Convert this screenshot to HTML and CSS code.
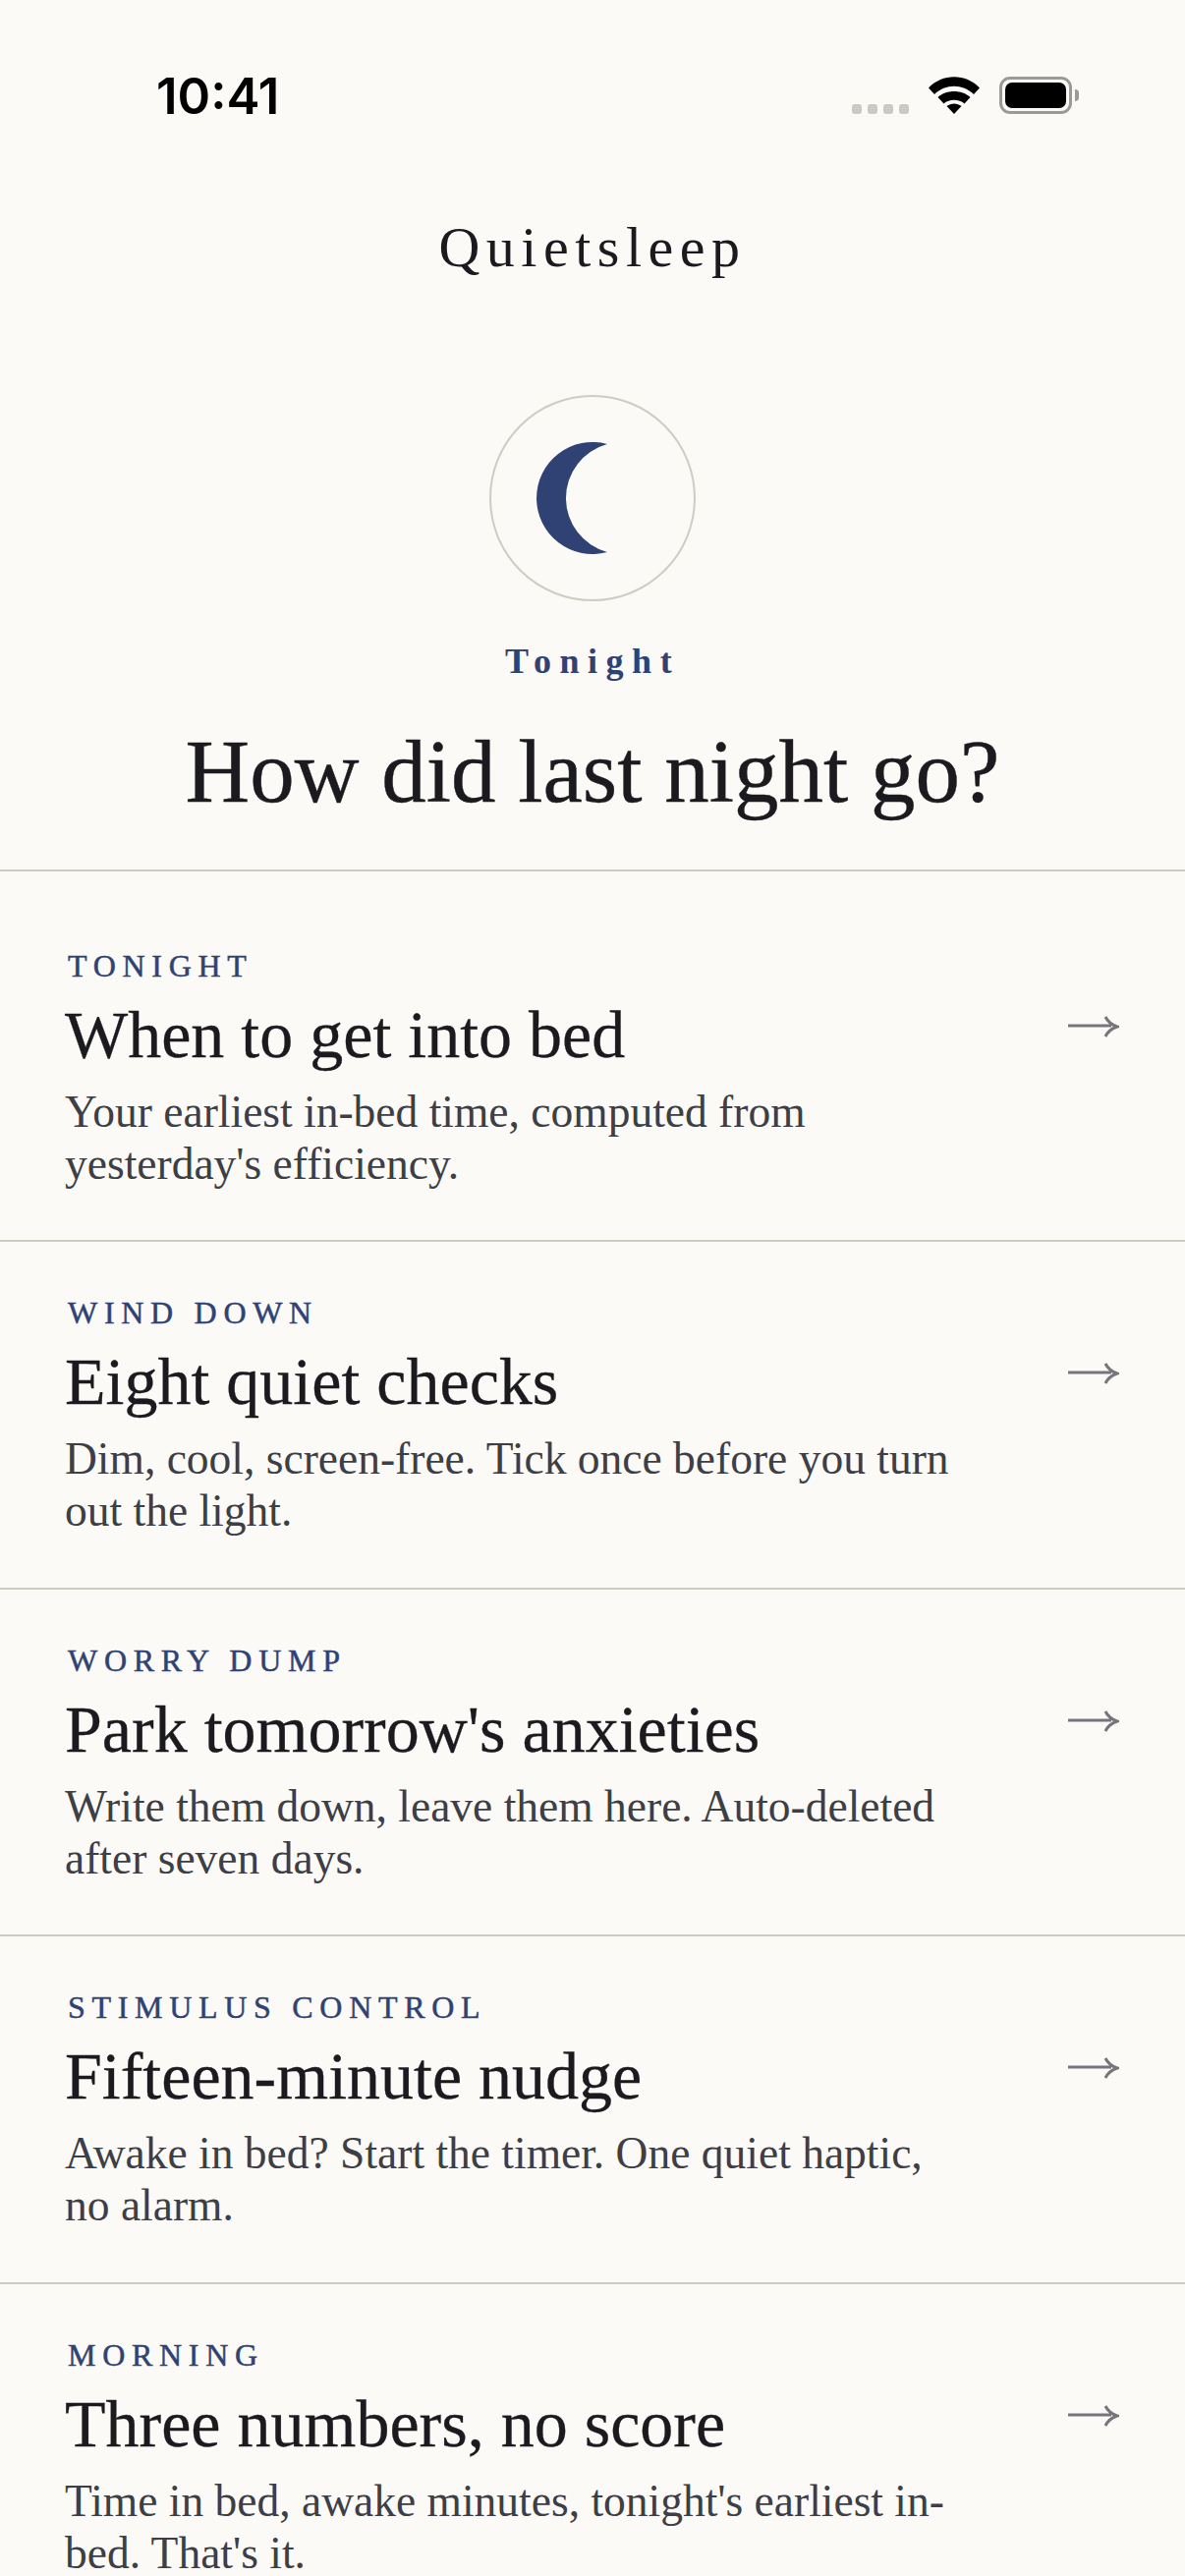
FILE: index.html
```html
<!DOCTYPE html>
<html lang="en">
<head>
    <meta charset="UTF-8">
    <meta name="viewport" content="width=device-width, initial-scale=1.0">
    <title>Quietsleep</title>
    <link rel="stylesheet" href="styles.css">
</head>
<body>
    <div class="status-bar">
        <span class="time">10:41</span>
        <div class="status-icons">
            <div class="signal"><i></i><i></i><i></i><i></i></div>
            <svg class="wifi" width="52" height="38" viewBox="0 0 52 38">
                <path d="M0 11.5 C14 -3.5 38 -3.5 52 11.5 L46 18 C35 7 17 7 6 18 Z" fill="#000"/>
                <path d="M9.5 21 C18 13 34 13 42.500 21 L36.500 27.500 C31 22.500 21 22.500 15.500 27.500 Z" fill="#000"/>
                <path d="M18.500 30 C23 26.500 29 26.500 33.500 30 L26 38 Z" fill="#000"/>
            </svg>
            <div class="battery"><div class="battery-fill"></div></div>
        </div>
    </div>

    <header class="brand">Quietsleep</header>

    <section class="hero">
        <div class="moon-ring">
            <svg width="74" height="114" viewBox="0 0 74 114">
                <path d="M73 2 A57 57 0 1 0 73 112 A57 57 0 0 1 73 2 Z" fill="#2f4273"/>
            </svg>
        </div>
        <div class="hero-label">Tonight</div>
        <h1>How did last night go?</h1>
    </section>

    <main class="list">
        <a class="row">
            <div class="row-text">
                <div class="eyebrow">TONIGHT</div>
                <h2>When to get into bed</h2>
                <p>Your earliest in-bed time, computed from yesterday's efficiency.</p>
            </div>
            <svg class="arrow" width="52" height="30" viewBox="0 0 52 30"><path d="M0 14 H44 M38 5 C40 9 44 13 50 15 C44 17 40 21 38 25" fill="none" stroke="#77757c" stroke-width="3"/></svg>
        </a>
        <a class="row">
            <div class="row-text">
                <div class="eyebrow">WIND DOWN</div>
                <h2>Eight quiet checks</h2>
                <p>Dim, cool, screen-free. Tick once before you turn out the light.</p>
            </div>
            <svg class="arrow" width="52" height="30" viewBox="0 0 52 30"><path d="M0 14 H44 M38 5 C40 9 44 13 50 15 C44 17 40 21 38 25" fill="none" stroke="#77757c" stroke-width="3"/></svg>
        </a>
        <a class="row">
            <div class="row-text">
                <div class="eyebrow">WORRY DUMP</div>
                <h2>Park tomorrow's anxieties</h2>
                <p>Write them down, leave them here. Auto-deleted after seven days.</p>
            </div>
            <svg class="arrow" width="52" height="30" viewBox="0 0 52 30"><path d="M0 14 H44 M38 5 C40 9 44 13 50 15 C44 17 40 21 38 25" fill="none" stroke="#77757c" stroke-width="3"/></svg>
        </a>
        <a class="row">
            <div class="row-text">
                <div class="eyebrow">STIMULUS CONTROL</div>
                <h2>Fifteen-minute nudge</h2>
                <p>Awake in bed? Start the timer. One quiet haptic, no alarm.</p>
            </div>
            <svg class="arrow" width="52" height="30" viewBox="0 0 52 30"><path d="M0 14 H44 M38 5 C40 9 44 13 50 15 C44 17 40 21 38 25" fill="none" stroke="#77757c" stroke-width="3"/></svg>
        </a>
        <a class="row">
            <div class="row-text">
                <div class="eyebrow">MORNING</div>
                <h2>Three numbers, no score</h2>
                <p>Time in bed, awake minutes, tonight's earliest in-bed. That's it.</p>
            </div>
            <svg class="arrow" width="52" height="30" viewBox="0 0 52 30"><path d="M0 14 H44 M38 5 C40 9 44 13 50 15 C44 17 40 21 38 25" fill="none" stroke="#77757c" stroke-width="3"/></svg>
        </a>
    </main>
</body>
</html>
```

FILE: styles.css
```css
:root {
    --paper: #fbfaf6;
    --ink: #1b1b1f;
    --ink-soft: #3d3e46;
    --navy: #2f4273;
    --rule: #cfccc4;
}

html, body {
    height: 2622px;
    overflow: hidden;
}

body {
    margin: 0;
    background: var(--paper);
    color: var(--ink);
    font-family: "Liberation Serif", serif;
}

/* Status bar */
.status-bar {
    display: flex;
    justify-content: space-between;
    align-items: flex-start;
    height: 190px;
    padding: 0 115px 0 159px;
    box-sizing: border-box;
}

.time {
    margin-top: 67px;
    font-family: Inter, sans-serif;
    font-size: 51px;
    line-height: 62px;
    font-weight: 600;
    color: #000;
}

.status-icons {
    display: flex;
    align-items: flex-end;
    gap: 20px;
    margin-top: 78px;
}

.signal {
    display: flex;
    gap: 6px;
}

.signal i {
    width: 10px;
    height: 10px;
    border-radius: 3px;
    background: #cbc9c4;
}

.wifi {
    display: block;
}

.battery {
    position: relative;
    width: 74px;
    height: 38px;
    border: 3px solid #9b9a97;
    border-radius: 11px;
    padding: 3px;
    box-sizing: border-box;
}

.battery::after {
    content: "";
    position: absolute;
    right: -10px;
    top: 10px;
    width: 4px;
    height: 12px;
    background: #9b9a97;
    border-radius: 0 6px 6px 0;
}

.battery-fill {
    height: 100%;
    background: #000;
    border-radius: 7px;
}

/* Brand and hero */
.brand {
    height: 183px;
    margin-top: 29px;
    text-align: center;
    font-size: 58px;
    line-height: 66px;
    letter-spacing: 6.5px;
}

.hero {
    display: flex;
    flex-direction: column;
    align-items: center;
    height: 483px;
}

.moon-ring {
    display: flex;
    align-items: center;
    justify-content: center;
    width: 210px;
    height: 210px;
    box-sizing: border-box;
    border: 2px solid var(--rule);
    border-radius: 50%;
}

.moon-ring svg {
    margin-right: 42px;
}

.hero-label {
    margin-top: 41px;
    font-size: 36px;
    line-height: 40px;
    font-weight: 700;
    letter-spacing: 8.5px;
    color: var(--navy);
}

h1 {
    margin: 38px 0 0;
    font-size: 91px;
    line-height: 110px;
    font-weight: 400;
    -webkit-text-stroke: 0.4px var(--ink);
}

/* Rows */
.list {
    border-top: 2px solid var(--rule);
}

.row {
    display: flex;
    justify-content: space-between;
    align-items: flex-start;
    height: 353.5px;
    box-sizing: border-box;
    padding: 54px 66px 0;
    border-bottom: 2px solid var(--rule);
}

/* first row sits a bit lower under the heading rule */
.row:first-child {
    height: 377px;
    padding-top: 78px;
}

.row-text {
    width: 905px;
}

.eyebrow {
    font-size: 32px;
    line-height: 36px;
    letter-spacing: 6.7px;
    -webkit-text-stroke: 0.5px var(--navy);
    color: var(--navy);
    padding-left: 3px;
}

h2 {
    margin: 16px 0 0;
    font-size: 68px;
    line-height: 72px;
    font-weight: 400;
    -webkit-text-stroke: 0.3px var(--ink);
}

p {
    margin: 16px 0 0;
    font-size: 45.5px;
    line-height: 53px;
    color: var(--ink-soft);
}

.arrow {
    margin-top: 65px;
    margin-right: 1px;
    flex-shrink: 0;
}
```
